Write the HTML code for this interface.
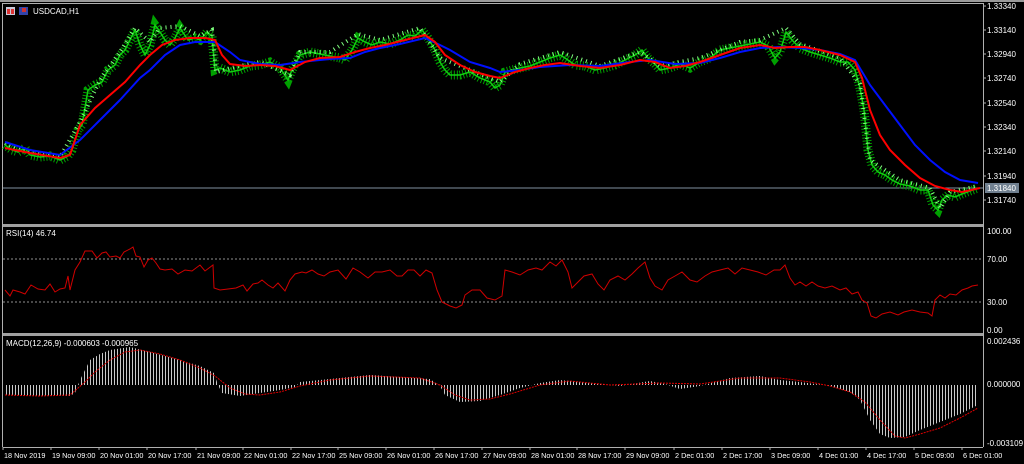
<!DOCTYPE html>
<html><head><meta charset="utf-8"><style>
html,body{margin:0;padding:0;background:#000;width:1024px;height:464px;overflow:hidden}
svg{display:block}
text{font-family:"Liberation Sans",sans-serif;font-size:8px;fill:#fff}
.t text{font-size:7.3px}
</style></head><body>
<svg width="1024" height="464" viewBox="0 0 1024 464">
<defs>
<pattern id="bars" width="3" height="10" patternUnits="userSpaceOnUse"><rect x="0" y="0" width="1" height="10" fill="#c8c8c8"/></pattern>
</defs>
<rect width="1024" height="464" fill="#000"/>
<rect x="0" y="0" width="1024" height="2" fill="#9a9a9a"/>
<rect x="2" y="3" width="1" height="444" fill="#b0b0b0"/>
<rect x="3" y="3" width="980" height="1" fill="#b0b0b0"/>
<rect x="983" y="3" width="1" height="444" fill="#b0b0b0"/>
<rect x="3" y="224" width="980" height="3" fill="#a0a0a0"/>
<rect x="3" y="333" width="980" height="3" fill="#a0a0a0"/>
<rect x="3" y="447" width="980" height="1" fill="#b0b0b0"/>
<rect x="6" y="7" width="9" height="8" fill="#c8c8d8"/><rect x="7" y="9" width="3" height="5" fill="#d33"/><rect x="11" y="9" width="3" height="5" fill="#d33"/>
<rect x="19" y="7" width="9" height="8" fill="#3344aa"/><rect x="22" y="8" width="4" height="4" fill="#c33"/>
<text x="33" y="14">USDCAD,H1</text>
<g>
<text x="987" y="9">1.33340</text><text x="987" y="33">1.33140</text><text x="987" y="57">1.32940</text><text x="987" y="81">1.32740</text><text x="987" y="106">1.32540</text><text x="987" y="130">1.32340</text><text x="987" y="154">1.32140</text><text x="987" y="179">1.31940</text><text x="987" y="203">1.31740</text>
</g>
<g stroke="#b0b0b0"><path d="M983 6h3M983 30h3M983 54h3M983 78h3M983 103h3M983 127h3M983 151h3M983 176h3M983 200h3"/></g>
<line x1="3" y1="188" x2="983" y2="188" stroke="#8090a0" stroke-width="1"/>
<rect x="985" y="183" width="34" height="10" fill="#708090"/><text x="987" y="191">1.31840</text>
<!-- candle texture -->
<polyline fill="none" stroke="#00a000" stroke-width="9" stroke-dasharray="1,2" points="5,145 12,150 18,152 25,148 30,155 40,157 50,156 60,160 68,156 72,150 78,130 82,125 88,90 95,85 102,82 108,70 115,65 120,55 125,50 130,40 135,30 140,45 145,55 150,45 155,25 160,32 165,40 170,45 175,38 180,28 188,40 195,38 200,40 207,32 212,36 215,70 220,68 230,72 240,70 250,66 260,65 270,62 280,68 288,80 292,70 300,55 310,52 320,54 330,56 340,58 345,60 352,50 358,38 365,42 372,45 380,42 390,44 400,40 408,35 415,36 422,30 428,38 435,50 440,62 445,70 450,75 460,75 470,72 480,78 490,82 495,88 500,85 505,72 512,70 520,68 530,66 540,62 550,58 560,55 565,58 575,65 585,66 595,70 605,68 615,65 625,60 635,55 642,50 648,58 655,64 660,70 670,68 680,64 690,68 700,62 710,58 720,50 730,48 740,46 750,44 760,42 768,46 775,58 780,52 786,32 792,40 800,48 810,52 820,55 830,58 840,62 848,62 855,70 860,88 864,110 868,150 872,165 878,172 885,175 892,180 900,184 910,186 920,190 928,190 933,205 938,210 942,200 948,195 955,197 962,194 970,191 978,188"/>
<polyline fill="none" stroke="#10d010" stroke-width="1.5" points="5,145 12,150 18,152 25,148 30,155 40,157 50,156 60,160 68,156 72,150 78,130 82,125 88,90 95,85 102,82 108,70 115,65 120,55 125,50 130,40 135,30 140,45 145,55 150,45 155,25 160,32 165,40 170,45 175,38 180,28 188,40 195,38 200,40 207,32 212,36 215,70 220,68 230,72 240,70 250,66 260,65 270,62 280,68 288,80 292,70 300,55 310,52 320,54 330,56 340,58 345,60 352,50 358,38 365,42 372,45 380,42 390,44 400,40 408,35 415,36 422,30 428,38 435,50 440,62 445,70 450,75 460,75 470,72 480,78 490,82 495,88 500,85 505,72 512,70 520,68 530,66 540,62 550,58 560,55 565,58 575,65 585,66 595,70 605,68 615,65 625,60 635,55 642,50 648,58 655,64 660,70 670,68 680,64 690,68 700,62 710,58 720,50 730,48 740,46 750,44 760,42 768,46 775,58 780,52 786,32 792,40 800,48 810,52 820,55 830,58 840,62 848,62 855,70 860,88 864,110 868,150 872,165 878,172 885,175 892,180 900,184 910,186 920,190 928,190 933,205 938,210 942,200 948,195 955,197 962,194 970,191 978,188"/>
<polyline fill="none" stroke="#7fff7f" stroke-width="4" stroke-dasharray="1,4" points="5,143 20,150 40,154 60,157 80,122 100,80 120,52 135,28 150,42 160,28 180,26 200,36 212,30 216,72 240,66 260,62 290,75 300,52 330,52 358,34 380,40 420,28 440,58 470,70 500,82 520,64 560,52 600,66 640,52 660,66 700,58 740,42 760,40 786,28 800,44 840,58 860,84 870,160 900,180 930,188 940,208 950,192 978,186"/>
<polyline fill="none" stroke="#0010ff" stroke-width="2" points="5,142 30,150 60,155 80,140 100,120 120,100 140,78 150,70 165,55 180,45 195,42 215,42 230,52 240,60 260,64 280,65 300,62 330,59 350,58 365,52 380,48 400,44 425,38 440,45 450,50 470,62 490,68 500,72 520,70 540,67 570,65 600,66 630,62 650,60 675,64 700,63 720,58 740,52 760,48 780,47 800,48 820,50 840,54 855,60 870,85 885,105 900,125 915,145 930,160 945,172 960,180 978,183"/>
<polyline fill="none" stroke="#ff0000" stroke-width="2" points="5,148 30,153 60,158 70,155 80,125 95,108 110,95 125,82 140,65 150,55 162,45 175,40 190,38 205,38 215,40 222,55 230,64 245,66 260,65 275,66 290,70 305,62 320,58 340,57 355,52 370,48 385,45 405,40 425,35 435,42 445,55 460,65 475,72 490,76 500,78 515,72 530,68 545,65 560,63 580,66 600,68 620,65 640,60 655,62 670,68 685,66 700,62 720,55 740,48 760,45 775,48 790,47 805,47 820,50 840,55 855,62 862,78 870,110 880,135 890,150 905,165 920,178 935,186 950,190 962,192 980,188"/>
<text x="6" y="236">RSI(14) 46.74</text>
<text x="987" y="234">100.00</text><text x="987" y="262">70.00</text><text x="987" y="305">30.00</text><text x="987" y="333">0.00</text>
<line x1="3" y1="259" x2="983" y2="259" stroke="#909090" stroke-dasharray="2,2"/>
<line x1="3" y1="302" x2="983" y2="302" stroke="#909090" stroke-dasharray="2,2"/>
<polyline fill="none" stroke="#d00000" stroke-width="1" points="5,290 10,296 13,290 20,292 25,294 31,285 38,289 45,290 50,284 55,292 60,289 65,288 68,276 70,290 75,270 80,262 85,251 92,251 97,258 102,253 106,252 110,257 116,256 120,258 124,252 130,249 133,247 136,256 140,257 144,267 148,260 152,258 156,263 160,269 165,270 172,269 178,274 185,270 192,271 200,265 205,271 213,265 214,288 220,290 228,289 236,288 243,285 247,291 253,284 258,283 262,280 268,285 273,288 278,283 285,291 290,280 295,274 302,272 306,273 312,270 318,274 324,276 330,272 338,270 346,279 353,268 360,272 368,278 375,272 382,272 390,270 397,276 402,276 408,270 414,270 420,276 426,270 432,273 437,290 442,302 450,306 456,308 462,305 465,295 472,290 480,290 487,298 495,300 502,296 505,270 512,272 520,275 528,270 536,268 542,270 550,262 556,266 562,260 568,272 572,288 578,282 584,276 592,274 598,284 604,290 610,280 618,276 625,280 632,274 638,268 645,262 650,278 655,286 662,290 668,280 675,276 682,272 690,280 697,282 705,276 712,272 720,270 728,268 735,274 742,268 750,270 758,272 766,275 774,270 780,270 785,265 790,278 795,285 800,282 806,286 812,282 818,286 825,288 832,286 840,290 846,288 852,294 858,292 862,300 867,303 871,316 876,318 882,314 890,312 898,315 904,312 912,310 920,312 928,313 932,316 935,300 940,295 945,298 950,294 956,295 962,290 968,288 972,286 978,285"/>
<text x="6" y="346">MACD(12,26,9) -0.000603 -0.000965</text>
<text x="987" y="344">0.002436</text><text x="987" y="387">0.000000</text><text x="987" y="446">-0.003109</text>
<path fill="url(#bars)" d="M5,385 L5,395 L70,396 L75,393 L80,380 L90,360 L100,354 L110,350 L130,347 L150,352 L165,356 L180,360 L200,366 L214,373 L218,385 L222,393 L240,396 L260,393 L280,390 L295,387 L300,382 L330,379 L370,375 L400,377 L430,379 L440,386 L445,395 L460,402 L480,401 L500,395 L520,388 L540,383 L560,380 L590,383 L620,386 L650,381 L665,384 L680,389 L700,386 L730,378 L760,376 L780,380 L800,382 L830,386 L850,392 L860,400 L870,420 L880,434 L890,438 L905,437 L920,430 L940,422 L960,414 L978,405 L978,385 Z"/>
<polyline fill="none" stroke="#e00000" stroke-width="1" stroke-dasharray="2,1" points="5,395 40,396 70,395 85,382 95,372 110,360 125,352 140,350 160,354 180,360 200,368 215,376 230,388 245,394 260,395 280,392 300,386 330,380 370,376 420,378 440,385 455,395 470,400 490,399 510,394 540,385 570,381 610,385 660,383 700,384 740,378 780,378 810,382 830,386 850,392 865,402 880,420 895,436 905,438 920,434 940,428 960,418 978,408"/>
<g stroke="#b0b0b0"><path d="M3,447v3M51,447v3M99,447v3M147,447v3M196,447v3M243,447v3M291,447v3M338,447v3M386,447v3M434,447v3M482,447v3M530,447v3M577,447v3M625,447v3M674,447v3M722,447v3M770,447v3M818,447v3M866,447v3M914,447v3M962,447v3"/></g>
<g class="t">
<text x="4" y="458">18 Nov 2019</text><text x="52" y="458">19 Nov 09:00</text><text x="100" y="458">20 Nov 01:00</text><text x="148" y="458">20 Nov 17:00</text><text x="197" y="458">21 Nov 09:00</text><text x="244" y="458">22 Nov 01:00</text><text x="292" y="458">22 Nov 17:00</text><text x="339" y="458">25 Nov 09:00</text><text x="387" y="458">26 Nov 01:00</text><text x="435" y="458">26 Nov 17:00</text><text x="483" y="458">27 Nov 09:00</text><text x="531" y="458">28 Nov 01:00</text><text x="578" y="458">28 Nov 17:00</text><text x="626" y="458">29 Nov 09:00</text><text x="675" y="458">2 Dec 01:00</text><text x="723" y="458">2 Dec 17:00</text><text x="771" y="458">3 Dec 09:00</text><text x="819" y="458">4 Dec 01:00</text><text x="867" y="458">4 Dec 17:00</text><text x="915" y="458">5 Dec 09:00</text><text x="963" y="458">6 Dec 01:00</text>
</g>
</svg>
</body></html>
